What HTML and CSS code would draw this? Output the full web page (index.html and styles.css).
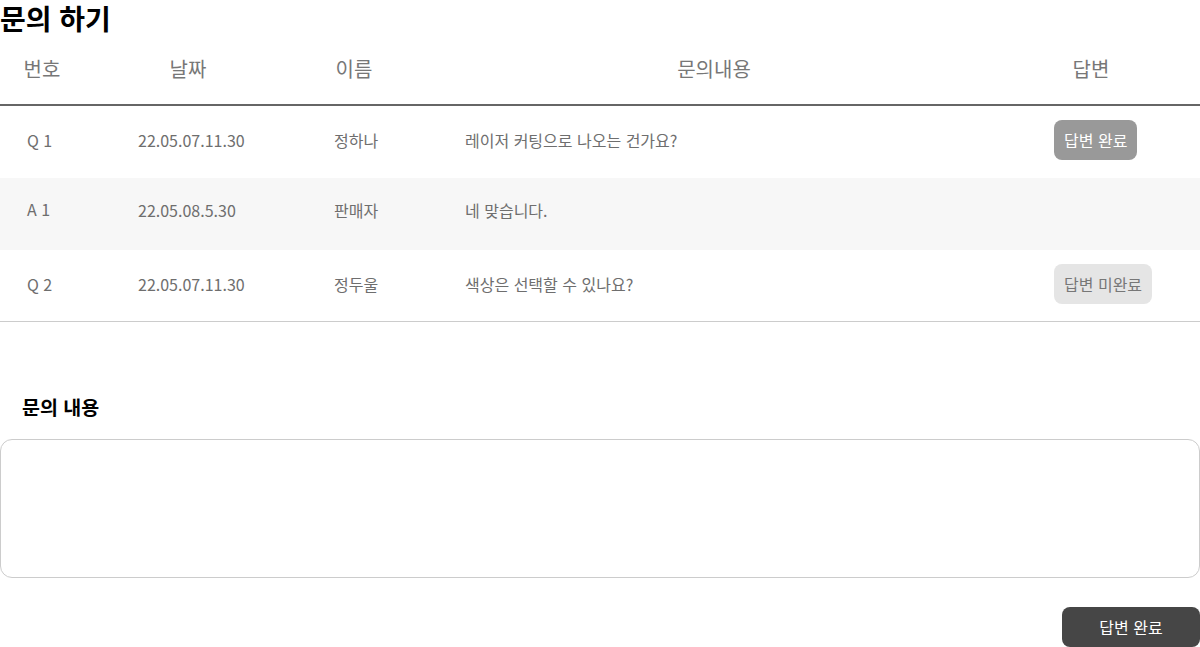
FILE: index.html
```html
<!DOCTYPE html>
<html lang="ko">

<head>
    <meta charset="UTF-8">
    <meta name="viewport" content="width=device-width, initial-scale=1.0">
    <title>문의 하기</title>
    <link rel="stylesheet" href="styles.css">
</head>

<body>
    <div id="inquiryContainer">
        <h1 class="inquiry-title">문의 하기</h1>

        <div class="inquiry-table">
            <div class="inquiry-row inquiry-head">
                <div class="cell">번호</div>
                <div class="cell">날짜</div>
                <div class="cell">이름</div>
                <div class="cell">문의내용</div>
                <div class="cell col-head-state">답변</div>
            </div>
            <div class="inquiry-row first">
                <div class="cell col-no">Q 1</div>
                <div class="cell col-date">22.05.07.11.30</div>
                <div class="cell col-name">정하나</div>
                <div class="cell col-text">레이저 커팅으로 나오는 건가요?</div>
                <div class="cell col-state"><span class="state-badge done">답변 완료</span></div>
            </div>
            <div class="inquiry-row answer">
                <div class="cell col-no raised">A 1</div>
                <div class="cell col-date">22.05.08.5.30</div>
                <div class="cell col-name">판매자</div>
                <div class="cell col-text">네 맞습니다.</div>
                <div class="cell col-state"></div>
            </div>
            <div class="inquiry-row last">
                <div class="cell col-no">Q 2</div>
                <div class="cell col-date">22.05.07.11.30</div>
                <div class="cell col-name">정두울</div>
                <div class="cell col-text">색상은 선택할 수 있나요?</div>
                <div class="cell col-state"><span class="state-badge pending">답변 미완료</span></div>
            </div>
        </div>

        <div class="reply-section">
            <h2 class="reply-label">문의 내용</h2>
            <textarea class="reply-input"></textarea>
            <div class="reply-actions">
                <button class="reply-button">답변 완료</button>
            </div>
        </div>
    </div>
</body>

</html>
```

FILE: styles.css
```css
body {
    margin: 0;
    background-color: #fff;
    color: #000;
    font-family: "Noto Sans CJK KR", "Noto Sans", sans-serif;
}

#inquiryContainer {
    width: 1200px;
}

.inquiry-title {
    margin: 0;
    font-size: 28px;
    font-weight: 700;
    line-height: 36px;
    height: 35px;
}

.inquiry-row {
    display: grid;
    grid-template-columns: 84px 208px 124px 596px 188px;
    align-items: center;
    height: 72px;
    font-size: 16px;
    color: #6e6e6e;
}

.inquiry-head {
    height: 69px;
    border-bottom: 2px solid #666;
    font-size: 20px;
    color: #777;
}

.inquiry-head .cell {
    text-align: center;
    padding-bottom: 2px;
}

.inquiry-head .col-head-state {
    padding-right: 30px;
}

.inquiry-row.first .cell {
    padding-bottom: 4px;
}

.inquiry-row.answer {
    background-color: #f7f7f7;
}

.inquiry-row.answer .cell {
    padding-bottom: 8px;
}

.inquiry-row.last {
    height: 71px;
    border-bottom: 1px solid #ccc;
}

.inquiry-row.last .cell {
    padding-bottom: 3px;
}

.col-no {
    padding-left: 27px;
}

.inquiry-row.answer .col-no.raised {
    padding-bottom: 10px;
}

.col-date {
    padding-left: 54px;
}

.col-name {
    padding-left: 42px;
}

.col-text {
    padding-left: 49px;
}

.col-state {
    padding-left: 42px;
}

.state-badge {
    display: inline-block;
    height: 40px;
    line-height: 40px;
    padding: 0 10px;
    border-radius: 8px;
    font-size: 16px;
}

.state-badge.done {
    background-color: #999;
    color: #fff;
}

.state-badge.pending {
    background-color: #e5e5e5;
    color: #777;
}

.reply-section {
    padding-top: 71px;
}

.reply-label {
    margin: 0 0 18px 22px;
    font-size: 19.5px;
    font-weight: 700;
    line-height: 28px;
}

.reply-input {
    display: block;
    box-sizing: border-box;
    width: 1200px;
    height: 139px;
    margin: 0;
    border: 1px solid #ccc;
    border-radius: 12px;
    resize: none;
    font-family: inherit;
}

.reply-actions {
    display: flex;
    justify-content: flex-end;
    padding-top: 29px;
}

.reply-button {
    width: 138px;
    height: 40px;
    background-color: #464646;
    color: #fff;
    border: none;
    border-radius: 8px;
    font-family: inherit;
    font-size: 16px;
    cursor: pointer;
}
```
